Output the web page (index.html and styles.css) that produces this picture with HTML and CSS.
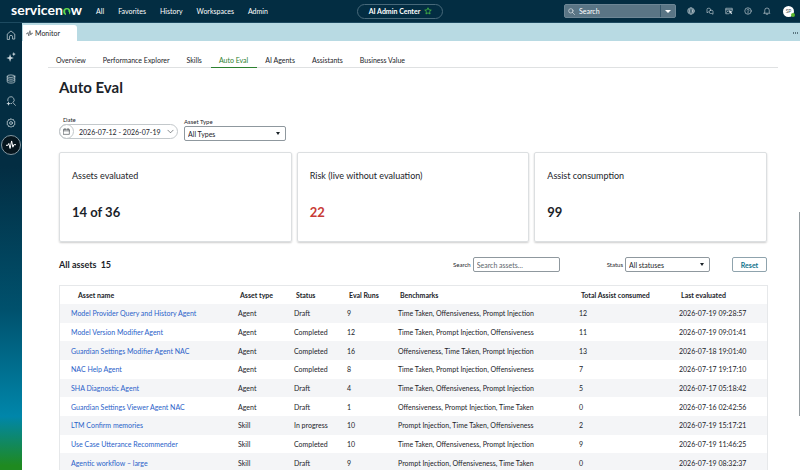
FILE: index.html
```html
<!DOCTYPE html>
<html lang="en">
<head>
<meta charset="utf-8">
<meta name="viewport" content="width=device-width, initial-scale=1">
<title>AI Admin Center</title>
<link rel="stylesheet" href="styles.css">
</head>
<body>
<header class="topbar">
  <div class="topbar-left">
    <a class="logo" href="#">servicen<span class="logo-o">o</span>w</a>
    <nav class="menu">
      <a href="#">All</a><a href="#">Favorites</a><a href="#">History</a><a href="#">Workspaces</a><a href="#">Admin</a>
    </nav>
  </div>
  <button class="context" type="button">AI Admin Center
    <svg class="star" viewBox="0 0 16 16"><path d="M8 1.500l1.900 4.300 4.600.5-3.400 3.100 1 4.600L8 11.700l-4.100 2.300 1-4.600L1.500 6.300l4.600-.5z"/></svg>
  </button>
  <div class="topbar-right">
    <div class="global-search">
      <label class="global-field">
        <svg class="icon" viewBox="0 0 16 16"><circle cx="6.500" cy="6.500" r="5"/><path d="M10.200 10.200L15 15"/></svg>
        <input type="text" placeholder="Search" aria-label="Search">
      </label>
      <button class="global-more" type="button" aria-label="Search options"><span class="caret caret-light"></span></button>
    </div>
    <div class="tools">
      <button type="button" aria-label="Language"><svg class="icon" viewBox="0 0 16 16"><circle cx="8" cy="8" r="6.500"/><ellipse cx="8" cy="8" rx="3" ry="6.500"/><path d="M2 6h12M2 10h12"/></svg></button>
      <button type="button" aria-label="Conversations"><svg class="icon" viewBox="0 0 16 16"><path d="M4.500 10L2 11.500V5a2.500 2.500 0 0 1 2.500-2.500h2A2.500 2.500 0 0 1 9 5"/><path d="M9.500 6.500h2A2.700 2.700 0 0 1 14 9v5.500L11.500 13h-2a3.200 3.200 0 0 1 0-6.500z"/></svg></button>
      <button type="button" aria-label="Screen guide"><svg class="icon" viewBox="0 0 16 16"><path d="M7 13.500H1.500v-11h13V7M2 5.500h12M3.500 10.500l3-3 2 2"/><path class="solid" d="M8 6.500l7 3-2.500 1.500 2 2.500-1.500 1.200-2-2.700-1.500 2z"/></svg></button>
      <button type="button" aria-label="Help"><svg class="icon" viewBox="0 0 16 16"><circle cx="8" cy="8" r="6.500"/><path d="M6 6.200c0-2.600 4-2.600 4 0C10 7.800 8 7.600 8 9.500M8 11v1.300"/></svg></button>
      <button type="button" aria-label="Notifications"><svg class="icon" viewBox="0 0 16 16"><path d="M3.500 11V6.500a4.500 4.500 0 0 1 9 0V11l1.500 1.500H2zM6.500 14.500h3"/></svg></button>
    </div>
    <button class="avatar" type="button">SP<span class="presence"></span></button>
  </div>
</header>
<div class="shell">
  <aside class="rail">
    <button type="button" aria-label="Home"><svg class="icon" viewBox="0 0 16 16"><path d="M2 14.500V6.500L8 1.500l6 5v8h-3.500V11a2.500 2.500 0 0 0-5 0v3.500z"/></svg></button>
    <button type="button" aria-label="AI"><svg class="icon" viewBox="0 0 16 16"><path class="solid" d="M6.500 3l1.500 4.800L12.500 9.500 8 11 6.500 16 5 11 .5 9.500 5 7.800zM12.500 0l.9 2.400 2.100.9-2.100.9-.9 2.400-.9-2.400-2.100-.9 2.100-.9z"/></svg></button>
    <button type="button" aria-label="Data"><svg class="icon" viewBox="0 0 16 16"><ellipse cx="8" cy="3.500" rx="6" ry="2"/><path d="M2 3.500v9c0 2.700 12 2.700 12 0v-9M2 6.500c0 2.700 12 2.700 12 0M2 9.500c0 2.700 12 2.700 12 0"/></svg></button>
    <button type="button" aria-label="Explore"><svg class="icon" viewBox="0 0 16 16"><path d="M2.800 7.500a5.200 5.200 0 1 1 8.200 3L15 15M8 12h1"/><path class="solid" d="M4 8.500l1 2.500 2.500 1L5 13l-1 2.500L3 13 .5 12 3 11z"/></svg></button>
    <button type="button" aria-label="Settings"><svg class="icon" viewBox="0 0 16 16"><path d="M8 1.200l1.700 1.500 2.300-.2.500 2.200 2 1.300-.9 2 .9 2.100-2 1.200-.5 2.300-2.300-.2L8 14.900l-1.700-1.500-2.300.2-.5-2.300-2-1.200.9-2.100-.9-2 2-1.300.5-2.200 2.300.2z"/><circle cx="8" cy="8" r="2.300"/></svg></button>
    <button class="rail-active" type="button" aria-label="Monitor"><svg class="icon" viewBox="0 0 16 16"><path d="M.5 8.500H3l1.500-3 2 8L9 1.500l2 10 1.500-4h3"/></svg></button>
  </aside>
  <div class="workspace">
    <div class="tabstrip">
      <button class="tab" type="button"><svg class="icon" viewBox="0 0 16 16"><path d="M.5 8.500H3l1.500-3 2 8L9 1.500l2 10 1.500-4h3"/></svg>Monitor</button>
      <button class="more" type="button" aria-label="More tabs"><i></i><i></i><i></i></button>
    </div>
    <main class="page">
      <nav class="subnav">
        <a href="#">Overview</a><a href="#">Performance Explorer</a><a href="#">Skills</a><a class="current" href="#">Auto Eval</a><a href="#">AI Agents</a><a href="#">Assistants</a><a href="#">Business Value</a>
      </nav>
      <div class="content">
        <h1>Auto Eval</h1>
        <div class="filters">
          <div class="field">
            <label for="date">Date</label>
            <button class="date" id="date" type="button">
              <span class="date-icon"><svg class="icon" viewBox="0 0 16 16"><path d="M1.500 3h13v11.500h-13zM1.500 6.500h13M4.500 1v3M11.500 1v3"/></svg></span>
              <span class="date-range">2026-07-12 - 2026-07-19</span>
              <svg class="icon chevron" viewBox="0 0 16 16"><path d="M2 5l6 6 6-6"/></svg>
            </button>
          </div>
          <div class="field field-type">
            <label for="type">Asset Type</label>
            <div class="select select-type"><select id="type"><option>All Types</option></select><span class="caret"></span></div>
          </div>
        </div>
        <section class="cards">
          <article class="card"><h2>Assets evaluated</h2><p>14 of 36</p></article>
          <article class="card"><h2>Risk (live without evaluation)</h2><p class="risk">22</p></article>
          <article class="card"><h2>Assist consumption</h2><p>99</p></article>
        </section>
        <div class="toolbar">
          <h3>All assets <span>15</span></h3>
          <div class="inline-field search-field"><label for="q">Search</label><input id="q" type="text" placeholder="Search assets..."></div>
          <div class="inline-field status-field"><label for="status">Status</label>
            <div class="select select-status"><select id="status"><option>All statuses</option></select><span class="caret"></span></div>
          </div>
          <button class="reset" type="button">Reset</button>
        </div>
        <table class="assets">
          <colgroup><col class="c-name"><col class="c-type"><col class="c-status"><col class="c-runs"><col class="c-bench"><col class="c-total"><col class="c-last"></colgroup>
          <thead><tr><th>Asset name</th><th>Asset type</th><th>Status</th><th>Eval Runs</th><th>Benchmarks</th><th>Total Assist consumed</th><th>Last evaluated</th></tr></thead>
          <tbody>
            <tr><td><a href="#">Model Provider Query and History Agent</a></td><td>Agent</td><td>Draft</td><td>9</td><td>Time Taken, Offensiveness, Prompt Injection</td><td>12</td><td>2026-07-19 09:28:57</td></tr>
            <tr><td><a href="#">Model Version Modifier Agent</a></td><td>Agent</td><td>Completed</td><td>12</td><td>Time Taken, Prompt Injection, Offensiveness</td><td>11</td><td>2026-07-19 09:01:41</td></tr>
            <tr><td><a href="#">Guardian Settings Modifier Agent NAC</a></td><td>Agent</td><td>Completed</td><td>16</td><td>Offensiveness, Time Taken, Prompt Injection</td><td>13</td><td>2026-07-18 19:01:40</td></tr>
            <tr><td><a href="#">NAC Help Agent</a></td><td>Agent</td><td>Completed</td><td>8</td><td>Time Taken, Prompt Injection, Offensiveness</td><td>7</td><td>2026-07-17 19:17:10</td></tr>
            <tr><td><a href="#">SHA Diagnostic Agent</a></td><td>Agent</td><td>Draft</td><td>4</td><td>Time Taken, Offensiveness, Prompt Injection</td><td>5</td><td>2026-07-17 05:18:42</td></tr>
            <tr><td><a href="#">Guardian Settings Viewer Agent NAC</a></td><td>Agent</td><td>Draft</td><td>1</td><td>Offensiveness, Prompt Injection, Time Taken</td><td>0</td><td>2026-07-16 02:42:56</td></tr>
            <tr><td><a href="#">LTM Confirm memories</a></td><td>Skill</td><td>In progress</td><td>10</td><td>Prompt Injection, Time Taken, Offensiveness</td><td>2</td><td>2026-07-19 15:17:21</td></tr>
            <tr><td><a href="#">Use Case Utterance Recommender</a></td><td>Skill</td><td>Completed</td><td>10</td><td>Time Taken, Offensiveness, Prompt Injection</td><td>9</td><td>2026-07-19 11:46:25</td></tr>
            <tr><td><a href="#">Agentic workflow – large</a></td><td>Skill</td><td>Draft</td><td>9</td><td>Prompt Injection, Offensiveness, Time Taken</td><td>0</td><td>2026-07-19 08:32:37</td></tr>
          </tbody>
        </table>
      </div>
      <span class="scroll-thumb"></span>
    </main>
  </div>
</div>
</body>
</html>
```
FILE: styles.css
```css
* { box-sizing: border-box; }
body {
  margin: 0;
  height: 100vh;
  display: flex;
  flex-direction: column;
  overflow: hidden;
  font: 7px/10px Lato, "Open Sans", sans-serif;
  color: #1b2329;
  background: #fff;
}
a { color: inherit; text-decoration: none; }
button, input, select { font: inherit; color: inherit; margin: 0; padding: 0; border: 0; background: none; }
h1, h2, h3, p { margin: 0; }
.icon { width: 8px; height: 8px; flex: none; display: block; fill: none; stroke: currentColor; stroke-width: 1.2; stroke-linejoin: round; stroke-linecap: round; }
.icon .solid { fill: currentColor; stroke: none; }
.caret { width: 0; height: 0; border: 2px solid transparent; border-top: 3px solid #1b2329; border-bottom: 0; }
.caret-light { border-width: 3px 3px 0; border-top-color: #fff; }

/* Header */
.topbar {
  flex: none;
  display: grid;
  grid-template-columns: 1fr auto 1fr;
  align-items: center;
  height: 23px;
  color: #fff;
  background: #032d42;
  border-bottom: 1px solid #1d4a60;
}
.topbar-left { display: flex; align-items: center; padding-left: 11px; gap: 14px; }
.logo { font: 700 14px/16px Lato, sans-serif; margin-top: -2px; }
.logo-o { position: relative; color: #62d84e; }
.logo-o::after { content: ""; position: absolute; left: 3px; bottom: 3px; width: 3px; height: 3px; background: #032d42; }
.menu { display: flex; gap: 14px; }
.context {
  display: flex; align-items: center; gap: 4px;
  height: 15px; padding: 0 10px 0 11px;
  border: 1px solid #48697a; border-radius: 8px;
  font-weight: 700;
}
.star { width: 8px; height: 8px; fill: none; stroke: #4cc745; stroke-width: 1.5; }
.topbar-right { display: flex; align-items: center; justify-content: flex-end; padding-right: 6px; }
.global-search { display: flex; height: 14px; border-radius: 2px; background: #5a7585; border: 1px solid #6d8695; }
.global-field { display: flex; align-items: center; gap: 4px; padding-left: 3px; width: 95px; }
.global-field .icon { width: 7px; height: 7px; }
.global-field input { width: 80px; min-width: 0; outline: 0; }
.global-field input::placeholder { color: #fff; opacity: 1; }
.global-more { display: grid; place-items: center; width: 15px; border-left: 1px solid #35566a; }
.tools { display: flex; gap: 11px; padding: 0 12px 0 11px; color: #d5dee3; }
.tools button { display: block; }
.avatar { position: relative; width: 11px; height: 11px; border-radius: 50%; background: #fff; color: #4e5a62; font-size: 5px; line-height: 11px; text-align: center; }
.presence { position: absolute; right: -1px; bottom: 0; width: 4px; height: 4px; border-radius: 50%; background: #5cb82e; }

/* Side rail */
.shell { flex: 1; min-height: 0; display: flex; }
.rail {
  flex: none;
  display: flex; flex-direction: column; align-items: center; gap: 3px;
  width: 22px; padding-top: 2px;
  color: #c9d5db;
  background: linear-gradient(#032d42 0, #032d42 32%, #00516d 64%, #0086aa 88%, #1f8a20 99%);
}
.rail button { width: 20px; height: 19px; display: grid; place-items: center; }
.rail .icon { width: 10px; height: 10px; }
.rail .rail-active { height: 20px; border-radius: 50%; border: 1px solid #8296a0; background: #06151d; color: #fff; }
.rail-active .icon { stroke-width: 1.6; }

/* Workspace tabs */
.workspace { flex: 1; min-width: 0; display: flex; flex-direction: column; }
.tabstrip { flex: none; display: flex; justify-content: space-between; height: 18px; padding: 2px 2px 0 1px; background: #b8dae3; }
.tab { display: flex; align-items: center; gap: 2px; width: 54px; padding-left: 3px; background: #fff; border-radius: 0 3px 0 0; }
.tab .icon { width: 7px; height: 7px; }
.more { display: flex; align-items: center; gap: 1px; }
.more i { width: 1px; height: 2px; background: #5b7680; }

/* Page */
.page { position: relative; flex: 1; min-height: 0; overflow: hidden; padding: 11px 22px 0 26px; }
.scroll-thumb { position: absolute; right: 0; top: 171px; width: 1px; height: 204px; background: #959da1; }
.subnav { display: flex; border-bottom: 1px solid #dfe1e2; }
.subnav a { padding: 3px 9px 2px 8px; }
.subnav .current { color: #2c812f; border-bottom: 1px solid #2c812f; margin-bottom: -1px; }
.content { padding: 0 11px; }
h1 { padding-top: 10px; font-size: 15px; line-height: 18px; }
.filters { display: flex; align-items: flex-start; gap: 6px; padding-top: 20px; }
.field { display: flex; flex-direction: column; gap: 1px; }
.field label { padding-left: 4px; font-size: 6px; line-height: 7px; }
.field-type label { padding-left: 0; }
.field-type { padding-top: 2px; }
.date { display: flex; align-items: center; height: 15px; width: 119px; padding-right: 3px; border: 1px solid #c3c8cb; border-radius: 8px; white-space: nowrap; }
.date-icon { display: grid; place-items: center; width: 15px; height: 15px; margin: -1px 5px -1px -1px; border: 1px solid #c3c8cb; border-radius: 50%; }
.date-icon .icon { width: 7px; height: 7px; }
.chevron { width: 7px; height: 7px; margin-left: auto; }
.select { display: grid; align-items: center; height: 15px; border: 1px solid #8f989e; border-radius: 2px; }
.select select { grid-area: 1 / 1; width: 100%; height: 13px; padding: 0 16px 0 3px; appearance: none; outline: 0; }
.select .caret { grid-area: 1 / 1; justify-self: end; margin-right: 5px; pointer-events: none; }
.select-type { width: 102px; }
.select-status { width: 85px; }

.cards { display: grid; grid-template-columns: repeat(3, 1fr); gap: 5px; padding-top: 11px; }
.card { padding: 16px 12px 21px; border: 1px solid #dcdfe1; border-radius: 2px; box-shadow: 0 1px 2px rgba(0, 0, 0, .2); }
.card h2 { font-size: 9px; line-height: 13px; font-weight: 400; }
.card p { padding-top: 22px; font-size: 13px; line-height: 16px; font-weight: 700; }
.card .risk { color: #c83c36; }

.toolbar { display: flex; align-items: center; padding-top: 15px; }
.toolbar h3 { margin-right: auto; font-size: 9px; line-height: 15px; }
.toolbar h3 span { padding-left: 2px; }
.inline-field { display: flex; align-items: center; gap: 2px; }
.inline-field label { font-size: 6px; }
.inline-field input { width: 87px; height: 15px; padding: 0 3px; border: 1px solid #8f989e; border-radius: 2px; outline: 0; }
.inline-field input::placeholder { color: #5c666c; opacity: 1; }
.search-field { margin-right: 47px; }
.reset { width: 35px; height: 15px; margin-left: 22px; border: 1px solid #8fa3ad; border-radius: 2px; color: #11728c; font-weight: 700; }

.assets { width: 100%; height: 187px; margin-top: 13px; table-layout: fixed; border-collapse: separate; border-spacing: 0; border: 1px solid #e6e8ea; border-bottom: 0; }
.assets th, .assets td { padding: 0 0 0 2px; text-align: left; white-space: nowrap; vertical-align: middle; }
.assets th { height: 18px; padding-left: 4px; font-weight: 700; }
.assets td:first-child { padding-left: 11px; }
.assets th:first-child { padding-left: 18px; }
.assets tbody tr:nth-child(odd) { background: #f4f5f7; }
.assets td a { color: #2a62c9; }
.c-name { width: 176px; }
.c-type { width: 56px; }
.c-status { width: 53px; }
.c-runs { width: 51px; }
.c-bench { width: 181px; }
.c-total { width: 100px; }
.c-last { width: 90px; }
```
